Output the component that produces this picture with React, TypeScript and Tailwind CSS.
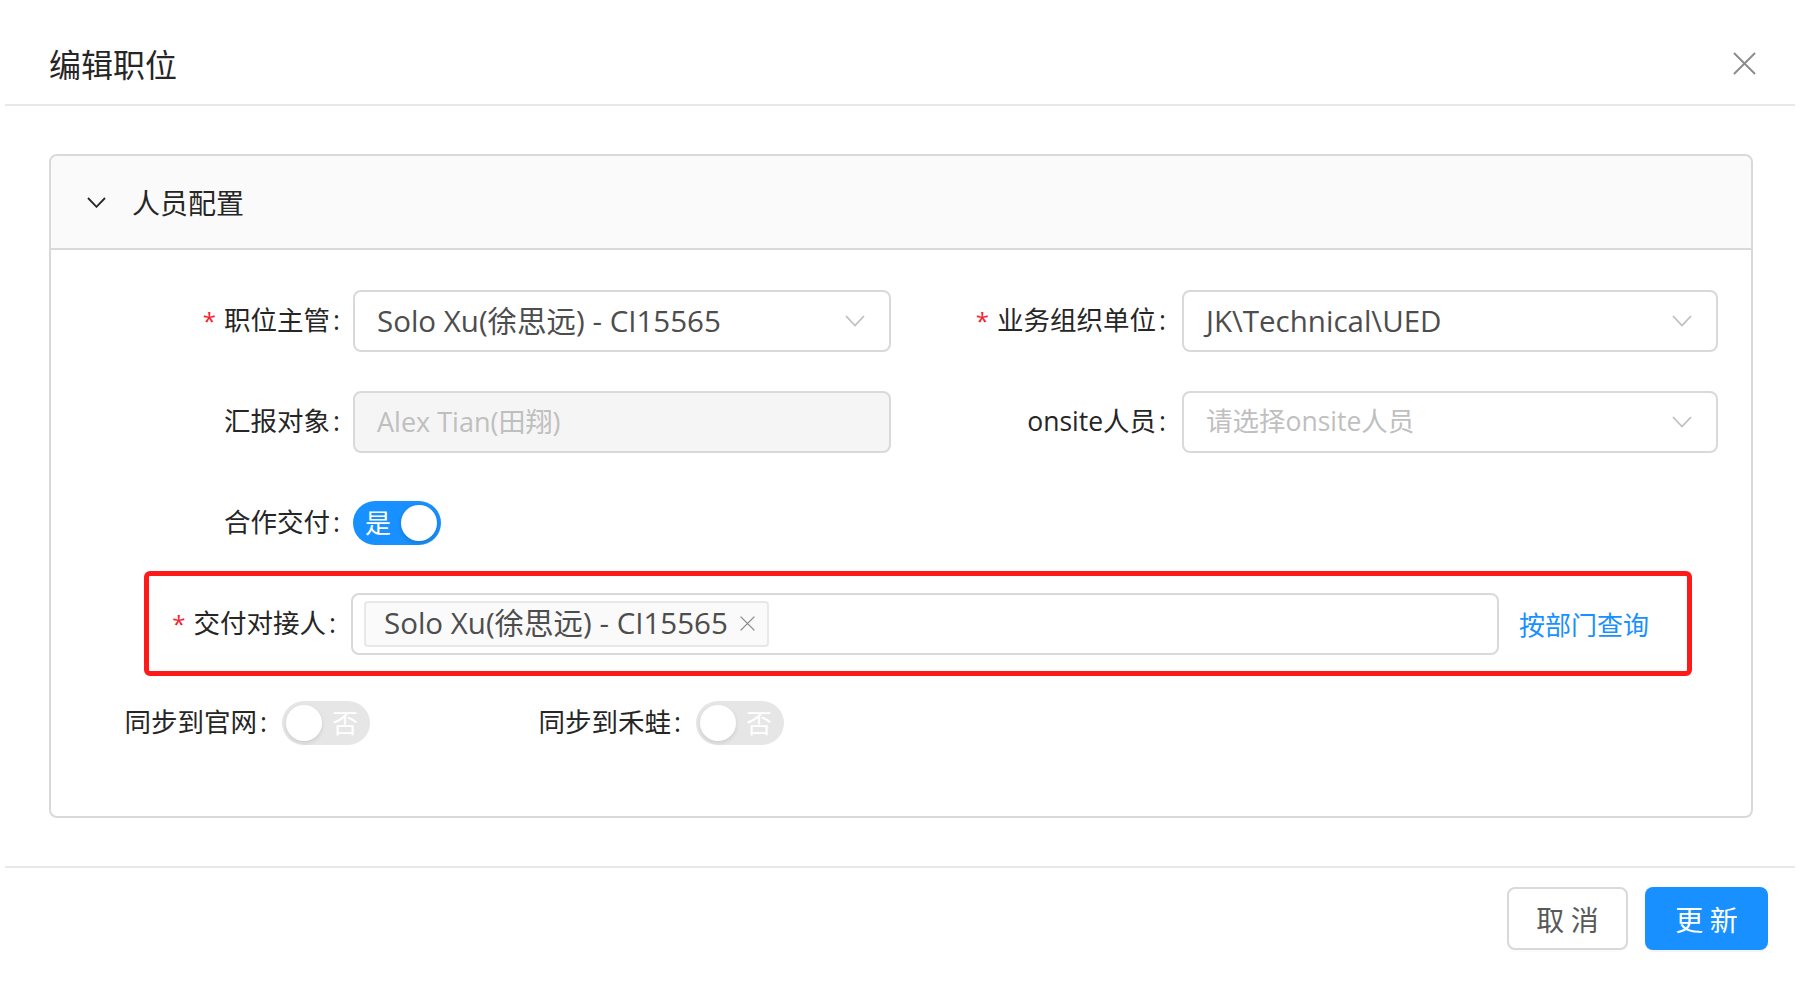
const font = "font-['Open_Sans','Noto_Sans_CJK_SC',sans-serif]";

function Label({ text, required }: { text: string; required?: boolean }) {
  return (
    <span className="flex items-center justify-end text-[26.5px] text-[#262626] whitespace-nowrap">
      {required && <span className="text-[#f5222d] text-[24px] mr-[8px] leading-none">*</span>}
      <span>{text}</span>
      <span className="ml-[3px]">:</span>
    </span>
  );
}

function Arrow() {
  return (
    <svg width="20" height="12" viewBox="0 0 20 12" className="shrink-0">
      <path d="M1 1 L10 10.5 L19 1" fill="none" stroke="#bfbfbf" strokeWidth="1.8" />
    </svg>
  );
}

function CloseIcon({ size, color, width }: { size: number; color: string; width: number }) {
  return (
    <svg width={size} height={size} viewBox="0 0 24 24" className="shrink-0">
      <path d="M1 1 L23 23 M23 1 L1 23" fill="none" stroke={color} strokeWidth={width} />
    </svg>
  );
}

function SelectBox({ value, placeholder }: { value?: string; placeholder?: string }) {
  return (
    <div className="flex h-[62px] w-full items-center justify-between rounded-[8px] border-2 border-[#d9d9d9] bg-white pl-[22px] pr-[24px]">
      {value ? (
        <span className="text-[29.5px] text-[#4d4d4d]">{value}</span>
      ) : (
        <span className="text-[26.5px] text-[#bfbfbf]">{placeholder}</span>
      )}
      <Arrow />
    </div>
  );
}

function Switch({ on, text }: { on: boolean; text: string }) {
  if (on) {
    return (
      <div className="flex h-[44px] w-[88px] items-center justify-between rounded-full bg-[#1890ff] pl-[12px] pr-[4px]">
        <span className="text-[26px] leading-none text-white">{text}</span>
        <span className="h-[36px] w-[36px] rounded-full bg-white shadow-[0_2px_4px_rgba(0,35,11,0.2)]" />
      </div>
    );
  }
  return (
    <div className="flex h-[44px] w-[88px] items-center justify-between rounded-full bg-[#e6e6e6] pl-[4px] pr-[12px]">
      <span className="h-[36px] w-[36px] rounded-full bg-white shadow-[0_2px_4px_rgba(0,35,11,0.12)]" />
      <span className="text-[26px] leading-none text-white">{text}</span>
    </div>
  );
}

export default function App() {
  return (
    <div className={`${font} h-[990px] w-[1800px] bg-white px-[5px]`}>
      {/* Header */}
      <div className="flex h-[106px] items-center justify-between border-b-2 border-[#e8e8e8] pl-[44px] pr-[39px] pt-[22px]">
        <span className="font-['Noto_Sans_CJK_SC',sans-serif] text-[32px] text-[#262626]">编辑职位</span>
        <CloseIcon size={23} color="#8c8c8c" width={2} />
      </div>

      {/* Collapse panel */}
      <div className="ml-[44px] mr-[42px] mt-[48px] rounded-[8px] border-2 border-[#d9d9d9]">
        <div className="flex h-[94px] items-center rounded-t-[8px] border-b-2 border-[#d9d9d9] bg-[#fafafa] pl-[36px]">
          <svg width="19" height="11" viewBox="0 0 19 11" className="shrink-0">
            <path d="M1 1 L9.5 9.8 L18 1" fill="none" stroke="#262626" strokeWidth="1.8" />
          </svg>
          <span className="ml-[26px] font-['Noto_Sans_CJK_SC',sans-serif] text-[28px] text-[#262626]">人员配置</span>
        </div>

        <div className="pb-[62px] pt-[40px]">
          {/* Row 1 */}
          <div className="flex h-[62px] items-center">
            <div className="w-[289px]">
              <Label text="职位主管" required />
            </div>
            <div className="ml-[13px] w-[538px]">
              <SelectBox value="Solo Xu(徐思远) - CI15565" />
            </div>
            <div className="w-[275px]">
              <Label text="业务组织单位" required />
            </div>
            <div className="ml-[16px] w-[536px]">
              <SelectBox value="JK\Technical\UED" />
            </div>
          </div>

          {/* Row 2 */}
          <div className="mt-[39px] flex h-[62px] items-center">
            <div className="w-[289px]">
              <Label text="汇报对象" />
            </div>
            <div className="ml-[13px] flex h-[62px] w-[538px] items-center rounded-[8px] border-2 border-[#d9d9d9] bg-[#f5f5f5] pl-[22px]">
              <span className="text-[27px] text-[#bfbfbf]">Alex Tian(田翔)</span>
            </div>
            <div className="w-[275px]">
              <Label text="onsite人员" />
            </div>
            <div className="ml-[16px] w-[536px]">
              <SelectBox placeholder="请选择onsite人员" />
            </div>
          </div>

          {/* Row 3 */}
          <div className="mt-[39px] flex h-[62px] items-center">
            <div className="w-[289px]">
              <Label text="合作交付" />
            </div>
            <div className="ml-[13px]">
              <Switch on text="是" />
            </div>
          </div>

          {/* Row 4, highlighted */}
          <div className="ml-[93px] mt-[17px] flex h-[105px] w-[1548px] items-center rounded-[6px] border-[5px] border-[#ff1a1a]">
            <div className="w-[187px]">
              <Label text="交付对接人" required />
            </div>
            <div className="ml-[15px] flex h-[62px] w-[1148px] items-center rounded-[8px] border-2 border-[#d9d9d9] pl-[11px]">
              <div className="flex h-[46px] items-center rounded-[4px] border-2 border-[#e8e8e8] bg-[#fafafa] pl-[18px] pr-[12px]">
                <span className="text-[29.5px] text-[#4d4d4d]">Solo Xu(徐思远) - CI15565</span>
                <span className="ml-[12px]">
                  <CloseIcon size={15} color="#8c8c8c" width={2.2} />
                </span>
              </div>
            </div>
            <span className="ml-[20px] font-['Noto_Sans_CJK_SC',sans-serif] text-[26px] text-[#1890ff]">按部门查询</span>
          </div>

          {/* Row 5 */}
          <div className="mt-[16px] flex h-[62px] items-center">
            <div className="w-[216px]">
              <Label text="同步到官网" />
            </div>
            <div className="ml-[15px]">
              <Switch on={false} text="否" />
            </div>
            <div className="w-[311px]">
              <Label text="同步到禾蛙" />
            </div>
            <div className="ml-[15px]">
              <Switch on={false} text="否" />
            </div>
          </div>
        </div>
      </div>

      {/* Footer */}
      <div className="mt-[48px] flex h-[124px] items-start justify-end gap-[17px] border-t-2 border-[#e8e8e8] pr-[27px] pt-[19px]">
        <button className="h-[63px] w-[121px] rounded-[8px] border-2 border-[#d9d9d9] bg-white font-['Noto_Sans_CJK_SC',sans-serif] text-[28px] text-[#595959] shadow-[0_2px_0_rgba(0,0,0,0.015)]">
          取 消
        </button>
        <button className="h-[63px] w-[123px] rounded-[8px] bg-[#1890ff] font-['Noto_Sans_CJK_SC',sans-serif] text-[28px] text-white shadow-[0_2px_0_rgba(0,0,0,0.045)]">
          更 新
        </button>
      </div>
    </div>
  );
}
